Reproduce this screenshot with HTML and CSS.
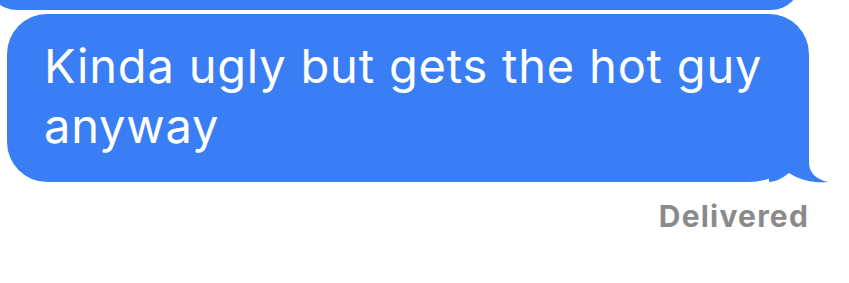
FILE: index.html
```html
<!DOCTYPE html>
<html>
<head>
<meta charset="utf-8">
<link rel="stylesheet" href="styles.css">
</head>
<body>
<div class="thread">
  <div class="bubble bubble-prev"></div>
  <div class="bubble bubble-main">
    <p class="msg">Kinda ugly but gets the hot guy anyway</p>
    <svg class="tail" width="60" height="61" viewBox="0 0 60 61" aria-hidden="true">
      <path d="M0 0 H40 V40 C40 50 46 57 59 60 C47 61.5 30 58 20 51 C14 56 6 60 0 60 Z" fill="#3a7ef5"/>
    </svg>
  </div>
  <div class="status">Delivered</div>
</div>
</body>
</html>
```
FILE: styles.css
```css
html, body {
  margin: 0;
  padding: 0;
  background: #ffffff;
  overflow: hidden;
}
.thread {
  display: flex;
  flex-direction: column;
  font-family: Inter, "Noto Sans", sans-serif;
}
.bubble {
  background: #3a7ef5;
  border-radius: 40px;
}
.bubble-prev {
  height: 60px;
  margin-top: -50px;
  margin-left: -13px;
  width: 814px;
}
.bubble-main {
  position: relative;
  margin-top: 4px;
  margin-left: 7px;
  width: 802px;
  height: 168px;
  box-sizing: border-box;
  padding: 22px 20px 0 37px;
  border-bottom-right-radius: 60px;
}
.msg {
  margin: 0;
  color: #ffffff;
  font-size: 47px;
  line-height: 60px;
  font-weight: 400;
  letter-spacing: 0.8px;
}
.tail {
  position: absolute;
  right: -20px;
  bottom: -1px;
  display: block;
}
.status {
  align-self: flex-end;
  margin-right: 40px;
  margin-top: 16px;
  color: #8a8a8a;
  font-size: 30px;
  font-weight: 700;
  line-height: 36px;
  letter-spacing: 1.2px;
}
```
